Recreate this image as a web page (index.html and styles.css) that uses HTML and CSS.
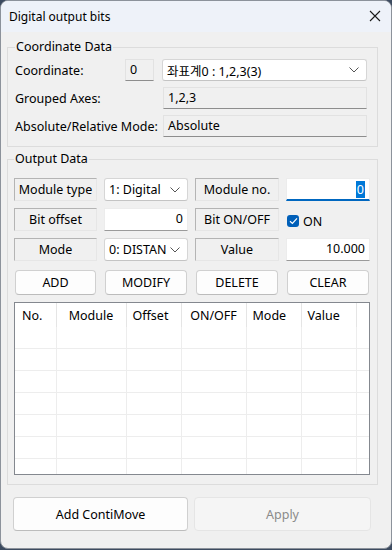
FILE: index.html
```html
<!DOCTYPE html>
<html lang="en">
<head>
    <meta charset="UTF-8">
    <meta name="viewport" content="width=device-width, initial-scale=1.0">
    <title>Digital output bits</title>
    <link rel="stylesheet" href="styles.css">
</head>
<body>
    <div class="window">
        <header class="title-bar">
            <span class="title">Digital output bits</span>
            <svg class="close-icon" width="12" height="12" viewBox="0 0 12 12">
                <path d="M1 1 L11 11 M11 1 L1 11" stroke="#1a1a1a" stroke-width="1.1" fill="none"/>
            </svg>
        </header>

        <main class="content">
            <fieldset class="group coord-group">
                <legend>Coordinate Data</legend>
                <div class="coord-row">
                    <span class="coord-label short">Coordinate:</span>
                    <span class="readonly-box small-box">0</span>
                    <div class="combo wide-combo">
                        <span>좌표계0 : 1,2,3(3)</span>
                        <svg class="chevron" width="10" height="6" viewBox="0 0 10 6"><polyline points="0.5,0.5 5,5 9.5,0.5" fill="none" stroke="#555" stroke-width="1"/></svg>
                    </div>
                </div>
                <div class="coord-row">
                    <span class="coord-label">Grouped Axes:</span>
                    <span class="readonly-box wide-box">1,2,3</span>
                </div>
                <div class="coord-row">
                    <span class="coord-label">Absolute/Relative Mode:</span>
                    <span class="readonly-box wide-box">Absolute</span>
                </div>
            </fieldset>

            <fieldset class="group output-group">
                <legend>Output Data</legend>
                <div class="field-grid">
                    <span class="static-box">Module type</span>
                    <div class="combo">
                        <span>1: Digital</span>
                        <svg class="chevron" width="10" height="6" viewBox="0 0 10 6"><polyline points="0.5,0.5 5,5 9.5,0.5" fill="none" stroke="#555" stroke-width="1"/></svg>
                    </div>
                    <span class="static-box">Module no.</span>
                    <div class="edit focused"><span class="selected">0</span></div>

                    <span class="static-box">Bit offset</span>
                    <div class="edit">0</div>
                    <span class="static-box">Bit ON/OFF</span>
                    <label class="check">
                        <span class="check-box">
                            <svg width="9" height="8" viewBox="0 0 9 8"><polyline points="1,4.2 3.4,6.4 8,1.4" fill="none" stroke="#fff" stroke-width="1.2"/></svg>
                        </span>
                        ON
                    </label>

                    <span class="static-box">Mode</span>
                    <div class="combo">
                        <span>0: DISTAN</span>
                        <svg class="chevron" width="10" height="6" viewBox="0 0 10 6"><polyline points="0.5,0.5 5,5 9.5,0.5" fill="none" stroke="#555" stroke-width="1"/></svg>
                    </div>
                    <span class="static-box">Value</span>
                    <div class="edit">10.000</div>

                    <button class="btn grid-btn">ADD</button>
                    <button class="btn grid-btn">MODIFY</button>
                    <button class="btn grid-btn">DELETE</button>
                    <button class="btn grid-btn">CLEAR</button>
                </div>

                <div class="list-view">
                    <table class="list-table">
                        <colgroup>
                            <col style="width:41px">
                            <col style="width:70px">
                            <col style="width:55px">
                            <col style="width:65px">
                            <col style="width:55px">
                            <col style="width:55px">
                            <col>
                        </colgroup>
                        <thead>
                            <tr>
                                <th>No.</th>
                                <th class="center">Module</th>
                                <th>Offset</th>
                                <th class="center">ON/OFF</th>
                                <th>Mode</th>
                                <th>Value</th>
                                <th class="filler"></th>
                            </tr>
                        </thead>
                        <tbody id="listRows"></tbody>
                    </table>
                </div>
            </fieldset>

            <div class="footer-buttons">
                <button class="btn big-btn">Add ContiMove</button>
                <button class="btn big-btn" disabled>Apply</button>
            </div>
        </main>
    </div>

    <script>
        // empty rows so the grid lines of the list show
        const rows = document.getElementById("listRows");
        for (let i = 0; i < 8; i++) {
            const tr = document.createElement("tr");
            tr.innerHTML = "<td></td><td></td><td></td><td></td><td></td><td></td><td></td>";
            rows.appendChild(tr);
        }
    </script>
</body>
</html>
```

FILE: styles.css
```css
body {
    margin: 0;
    padding: 0;
    background-color: #3d4b60;
    font-family: "Segoe UI", "Noto Sans", "Noto Sans CJK KR", sans-serif;
    font-size: 12px;
    color: #000;
}

.window {
    width: 390px;
    height: 547px;
    background-color: #f0f0f0;
    border: 1px solid #8c929b;
    border-radius: 8px;
    overflow: hidden;
}

.title-bar {
    height: 31px;
    background-color: #eef2f9;
    display: flex;
    align-items: center;
    justify-content: space-between;
    padding: 0 10px 0 8px;
}

.title {
    font-size: 12px;
    margin-top: -1px;
}

.close-icon {
    margin-top: -1px;
}

.content {
    padding: 7px 13px 0 6px;
}

.group {
    margin: 0;
    border: 1px solid #dcdcdc;
    padding: 0 8px 9px 7px;
}

.group legend {
    padding: 0 1px;
    line-height: 16px;
    font-size: 12.5px;
}

/* coordinate data */

.coord-group {
    padding-top: 4px;
    padding-bottom: 9px;
}

.coord-row {
    display: flex;
    align-items: center;
    height: 22px;
    margin-bottom: 6px;
}

.coord-row:last-child {
    margin-bottom: 0;
}

.coord-row + .coord-row + .coord-row {
    margin-top: 1px;
}

.coord-label {
    width: 148px;
    font-size: 12.5px;
}

.coord-label.short {
    width: 110px;
}

.readonly-box {
    box-sizing: border-box;
    height: 22px;
    line-height: 20px;
    background-color: #f0f0f0;
    border: 1px solid #e2e2e2;
    border-bottom-color: #8d8d8d;
    padding: 0 4px;
    font-size: 12.5px;
}

.small-box {
    width: 29px;
    margin-right: 8px;
}

.wide-box {
    width: 204px;
}

.combo {
    box-sizing: border-box;
    height: 23px;
    background-color: #fff;
    border: 1px solid #d6d6d6;
    border-bottom-color: #c4c4c4;
    border-radius: 3px;
    display: flex;
    align-items: center;
    justify-content: space-between;
    padding: 0 7px 0 4px;
    font-size: 12.5px;
    white-space: nowrap;
    overflow: hidden;
}

.wide-combo {
    width: 205px;
    height: 22px;
}

.chevron {
    flex-shrink: 0;
}

/* output data */

.output-group {
    margin-top: 4px;
    padding: 11px 7px 9px 6px;
}

.field-grid {
    display: grid;
    grid-template-columns: 83px 84px 84px 84px;
    grid-auto-rows: 23px;
    column-gap: 7px;
    row-gap: 7px;
}

.static-box {
    box-sizing: border-box;
    border: 1px solid;
    border-color: #b4b4b4 #e6e6e6 #e6e6e6 #b4b4b4;
    background-color: #f0f0f0;
    display: flex;
    align-items: center;
    justify-content: center;
    font-size: 12.5px;
}

.edit {
    box-sizing: border-box;
    background-color: #fff;
    border: 1px solid #ececec;
    border-bottom-color: #9a9a9a;
    text-align: right;
    padding: 0 4px;
    line-height: 20px;
    font-size: 12.5px;
}

.edit.focused {
    border-bottom: 2px solid #0067c0;
    padding-top: 1px;
}

.selected {
    background-color: #0078d7;
    color: #fff;
    padding: 0 1px;
}

.check {
    display: flex;
    align-items: center;
    gap: 4px;
    padding-left: 1px;
    padding-top: 3px;
    font-size: 12.5px;
}

.check-box {
    width: 12px;
    height: 12px;
    border-radius: 3px;
    background-color: #005fb8;
    display: flex;
    align-items: center;
    justify-content: center;
}

.btn {
    font-family: inherit;
    font-size: 12.5px;
    color: #000;
    background-color: #fdfdfd;
    border: 1px solid #d0d0d0;
    border-bottom-color: #bcbcbc;
    border-radius: 4px;
    padding: 0;
}

.btn:disabled {
    background-color: #f5f5f5;
    border-color: #e5e5e5;
    color: #8a8a8a;
}

.grid-btn {
    height: 25px;
    margin: 2px 1px 0 1px;
}

.list-view {
    margin-top: 11px;
    height: 171px;
    border: 1px solid #84888f;
    background-color: #fff;
    overflow: hidden;
}

.list-table {
    width: 100%;
    table-layout: fixed;
    border-collapse: collapse;
}

.list-table th {
    height: 24px;
    padding: 0 0 0 6px;
    text-align: left;
    font-weight: normal;
    font-size: 12.5px;
    border-right: 1px solid #e5e5e5;
    vertical-align: middle;
}

.list-table th:first-child {
    padding-left: 7px;
}

.list-table th.center {
    text-align: center;
    padding-left: 0;
}

.list-table th.filler {
    border-right: none;
}

.list-table td {
    height: 19px;
    border-right: 1px solid #ededed;
    border-bottom: 1px solid #ededed;
}

.list-table td:last-child {
    border-right: none;
}

.footer-buttons {
    display: flex;
    gap: 6px;
    margin-top: 12px;
    padding-left: 6px;
    padding-right: 7px;
}

.big-btn {
    width: 175px;
    height: 34px;
}

.big-btn:disabled {
    width: 177px;
}
```
